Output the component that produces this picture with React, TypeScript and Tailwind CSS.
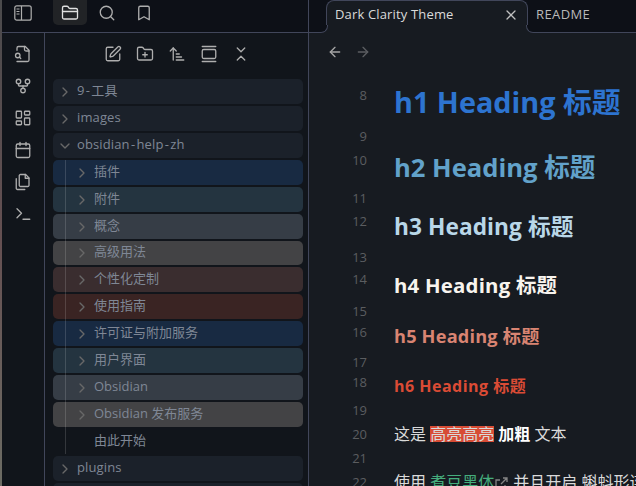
import { Fragment } from "react";
import type { ReactNode } from "react";
import {
  ArrowLeft,
  ArrowRight,
  Bookmark,
  Calendar,
  ChevronDown,
  ChevronRight,
  ChevronsDownUp,
  FolderClosed,
  FolderPlus,
  GalleryVertical,
  GitFork,
  LayoutDashboard,
  Search,
  SquarePen,
  X,
} from "lucide-react";

const icon = { size: 18, strokeWidth: 1.75 };

function Glyph({ children }: { children: ReactNode }) {
  return (
    <svg
      width="18"
      height="18"
      viewBox="0 0 24 24"
      fill="none"
      stroke="currentColor"
      strokeWidth="1.75"
      strokeLinecap="round"
      strokeLinejoin="round"
    >
      {children}
    </svg>
  );
}

const FileSearchIcon = () => (
  <Glyph>
    <path d="M4 22h14a2 2 0 0 0 2-2V7l-5-5H6a2 2 0 0 0-2 2v3" />
    <path d="M14 2v4a2 2 0 0 0 2 2h4" />
    <circle cx="5" cy="14" r="3" />
    <path d="m9 18-1.9-1.9" />
  </Glyph>
);

const FilesIcon = () => (
  <Glyph>
    <path d="M15.5 2H8.6c-.4 0-.8.2-1.1.5-.3.3-.5.7-.5 1.1v12.8c0 .4.2.8.5 1.1.3.3.7.5 1.1.5h9.8c.4 0 .8-.2 1.1-.5.3-.3.5-.7.5-1.1V6.5L15.5 2z" />
    <path d="M15 2v5h5" />
    <path d="M3 7.6v12.8c0 .4.2.8.5 1.1.3.3.7.5 1.1.5h9.8" />
  </Glyph>
);

const TerminalIcon = () => (
  <Glyph>
    <path d="m4 17 6-6-6-6" />
    <path d="M12 19h9" />
  </Glyph>
);

const SortIcon = () => (
  <Glyph>
    <path d="m3 8 4-4 4 4" />
    <path d="M7 4v16" />
    <path d="M11 12h4" />
    <path d="M11 16h7" />
    <path d="M11 20h10" />
  </Glyph>
);

const SidebarIcon = () => (
  <svg width="18" height="16" viewBox="0 0 18 16" fill="none" stroke="currentColor" strokeWidth="1.2">
    <rect x="0.8" y="0.8" width="16.4" height="14.4" rx="2" />
    <path d="M7.5 1v14M2.5 4h3M2.5 6.5h3M2.5 9h3" />
  </svg>
);

type Row = { label: string; bg: string; depth: number; open?: boolean; leaf?: boolean; h?: string };

const before: Row[] = [
  { label: "9-工具", bg: "bg-[#1b212a]", depth: 0 },
  { label: "images", bg: "bg-[#1b212a]", depth: 0 },
  { label: "obsidian-help-zh", bg: "bg-[#1b212a]", depth: 0, open: true },
];

const children: Row[] = [
  { label: "插件", bg: "bg-[#182a42]", depth: 1 },
  { label: "附件", bg: "bg-[#243440]", depth: 1 },
  { label: "概念", bg: "bg-[#363d46]", depth: 1 },
  { label: "高级用法", bg: "bg-[#434345]", depth: 1, h: "h-6" },
  { label: "个性化定制", bg: "bg-[#3a2d2f]", depth: 1 },
  { label: "使用指南", bg: "bg-[#3a2423]", depth: 1 },
  { label: "许可证与附加服务", bg: "bg-[#182a42]", depth: 1 },
  { label: "用户界面", bg: "bg-[#243440]", depth: 1 },
  { label: "Obsidian", bg: "bg-[#363d46]", depth: 1 },
  { label: "Obsidian 发布服务", bg: "bg-[#434345]", depth: 1 },
  { label: "由此开始", bg: "", depth: 1, leaf: true },
];

const after: Row[] = [
  { label: "plugins", bg: "bg-[#1b212a]", depth: 0 },
  { label: "", bg: "bg-[#1b212a]", depth: 0, leaf: true },
];

function TreeRow({ label, bg, depth, open, leaf, h = "h-[25px]" }: Row) {
  return (
    <div className={`flex shrink-0 items-center rounded-[5px] ${h} ${bg} ${depth ? "pl-[21px]" : "pl-1"}`}>
      <span className="flex w-5 shrink-0 text-[#686868]">
        {!leaf &&
          (open ? (
            <ChevronDown size={16} strokeWidth={2} />
          ) : (
            <ChevronRight size={16} strokeWidth={2} />
          ))}
      </span>
      <span className={`-mt-1 whitespace-nowrap text-[13px] leading-5 text-[#7f8795] ${depth ? "" : "tracking-[0.01em]"}`}>
        {label.split("-").map((part, i) => (
          <Fragment key={i}>
            {i > 0 && <span className="px-[1.2px]">-</span>}
            {part}
          </Fragment>
        ))}
      </span>
    </div>
  );
}

type Line = { n: number; h: string; cls?: string; latin?: string; cjk?: string; body?: ReactNode };

const lines: Line[] = [
  { n: 8, h: "h-[41px]", cls: "text-[28.8px] leading-[36px] text-[#2d74d0] font-bold", latin: "h1 Heading", cjk: "标题" },
  { n: 9, h: "h-[24px]" },
  { n: 10, h: "h-[38px]", cls: "text-[25.6px] leading-[37px] text-[#62a2ca] font-bold", latin: "h2 Heading", cjk: "标题" },
  { n: 11, h: "h-[23px]" },
  { n: 12, h: "h-[36px]", cls: "text-[22.7px] leading-[34px] tracking-[0.003em] text-[#b9d7e8] font-bold", latin: "h3 Heading", cjk: "标题" },
  { n: 13, h: "h-[22px]" },
  { n: 14, h: "h-[32px]", cls: "text-[20.4px] leading-[34px] tracking-[0.01em] text-[#f8f4ee] font-bold", latin: "h4 Heading", cjk: "标题" },
  { n: 15, h: "h-[21px]" },
  { n: 16, h: "h-[30px]", cls: "text-[18.2px] leading-[31px] tracking-[0.01em] text-[#d98472] font-bold", latin: "h5 Heading", cjk: "标题" },
  { n: 17, h: "h-[20px]" },
  { n: 18, h: "h-[28px]", cls: "text-[16px] leading-[30px] tracking-[0.03em] text-[#db4b35] font-bold", latin: "h6 Heading", cjk: "标题" },
  { n: 19, h: "h-[24px]" },
  {
    n: 20,
    h: "h-[24px]",
    body: (
      <>
        这是 <mark className="inline-block bg-[#d84c35] leading-4 text-[#dadada]">高亮高亮</mark>{" "}
        <b className="text-white">加粗</b> 文本
      </>
    ),
  },
  { n: 21, h: "h-[24px]" },
  {
    n: 22,
    h: "h-[24px]",
    body: (
      <>
        使用 <span className="text-[#45ad7c]">煮豆黑体</span>
        <svg className="mx-px inline-block" width="13" height="13" viewBox="0 0 13 13" fill="none" stroke="#858585" strokeWidth="1.3">
          <path d="M8 1h4v4M12 1 6 7M5 3H1v9h9V8" />
        </svg>{" "}
        并且开启 蝌蚪形连字
      </>
    ),
  },
];

function EditorLine({ n, h, cls, latin, cjk, body }: Line) {
  return (
    <div className={`flex shrink-0 ${h}`}>
      <span className="w-[58px] shrink-0 text-right text-[13px] leading-[23px] text-[#5b5d60]">{n}</span>
      <div className="ml-[27px] whitespace-pre">
        {latin && (
          <div className={cls}>
            {latin} {cjk}
          </div>
        )}
        {body && <div className="text-[16px] leading-[22px] text-[#dadada]">{body}</div>}
      </div>
    </div>
  );
}

export default function App() {
  return (
    <div className="flex h-[486px] w-[636px] overflow-hidden bg-[#11151b] font-['Open_Sans','Noto_Sans_CJK_SC',sans-serif]">
      <div className="w-0.5 shrink-0 bg-linear-to-b from-[#4a4a4c] via-[#655052] to-[#6c6c64]" />

      <div className="flex w-[306px] shrink-0 flex-col">
        <div className="flex h-[33px] shrink-0 border-b border-[#41465a] bg-[#0d1017] text-[#aeaeae]">
          <div className="ml-3 mt-[5px] w-[39px]">
            <SidebarIcon />
          </div>
          <div className="flex h-[25px] w-[34px] items-center justify-center rounded-b-[5px] bg-[#212326] text-[#e0e0e0]">
            <FolderClosed {...icon} />
          </div>
          <div className="flex h-[26px] w-[40px] items-center justify-center">
            <Search {...icon} />
          </div>
          <div className="flex h-[26px] w-[34px] items-center justify-center">
            <Bookmark {...icon} />
          </div>
        </div>

        <div className="flex min-h-0 flex-1">
          <div className="flex w-[43px] shrink-0 flex-col items-center gap-[14px] border-r border-[#41465a] pt-[12px] text-[#aeaeae]">
            <FileSearchIcon />
            <GitFork {...icon} />
            <LayoutDashboard {...icon} />
            <Calendar {...icon} />
            <FilesIcon />
            <TerminalIcon />
          </div>

          <div className="flex min-w-0 flex-1 flex-col">
            <div className="flex h-[46px] shrink-0 gap-[14px] pl-[59px] pt-[12px] text-[#aeaeae]">
              <SquarePen {...icon} />
              <FolderPlus {...icon} />
              <SortIcon />
              <GalleryVertical {...icon} />
              <ChevronsDownUp {...icon} />
            </div>
            <div className="flex flex-col gap-0.5 pl-2 pr-[5px]">
              {before.map((r) => (
                <TreeRow key={r.label} {...r} />
              ))}
              <div className="relative flex flex-col gap-0.5">
                {children.map((r) => (
                  <TreeRow key={r.label} {...r} />
                ))}
                <div className="absolute bottom-0 left-3 top-0 w-px bg-white/15" />
              </div>
              {after.map((r) => (
                <TreeRow key={r.label} {...r} />
              ))}
            </div>
          </div>
        </div>
      </div>

      <div className="flex min-w-0 flex-1 flex-col border-l border-[#41465a] bg-[#171b21]">
        <div className="flex h-[33px] shrink-0 border-b border-[#41465a] bg-[#0d1017] pl-[17px] text-[13px] text-[#dadada]">
          <div className="relative flex h-[33px] w-[202px] shrink-0 justify-between rounded-t-lg border-x border-t border-[#41465a] bg-[#171b21] pl-2 pr-2">
            <span className="mt-[3px] leading-5 tracking-[0.012em]">Dark Clarity Theme</span>
            <X className="mt-[6px] text-[#c0c0c0]" size={16} strokeWidth={1.9} />
            <div className="absolute -left-2 bottom-0 size-2 bg-[#171b21]">
              <div className="h-2 w-[9px] rounded-br-[7px] border-b border-r border-[#41465a] bg-[#0d1017]" />
            </div>
            <div className="absolute -right-2 bottom-0 size-2 bg-[#171b21]">
              <div className="-ml-px h-2 w-[9px] rounded-bl-[7px] border-b border-l border-[#41465a] bg-[#0d1017]" />
            </div>
          </div>
          <span className="ml-2 mt-1 leading-5 tracking-[0.03em] text-[#b9b9b9]">README</span>
        </div>

        <div className="flex h-[51px] shrink-0 gap-3 pl-[18px] pt-[11px]">
          <ArrowLeft size={16} strokeWidth={2} className="text-[#a5a5a5]" />
          <ArrowRight size={16} strokeWidth={2} className="text-[#5c5e62]" />
        </div>
        {lines.map((l) => (
          <EditorLine key={l.n} {...l} />
        ))}
      </div>
    </div>
  );
}
